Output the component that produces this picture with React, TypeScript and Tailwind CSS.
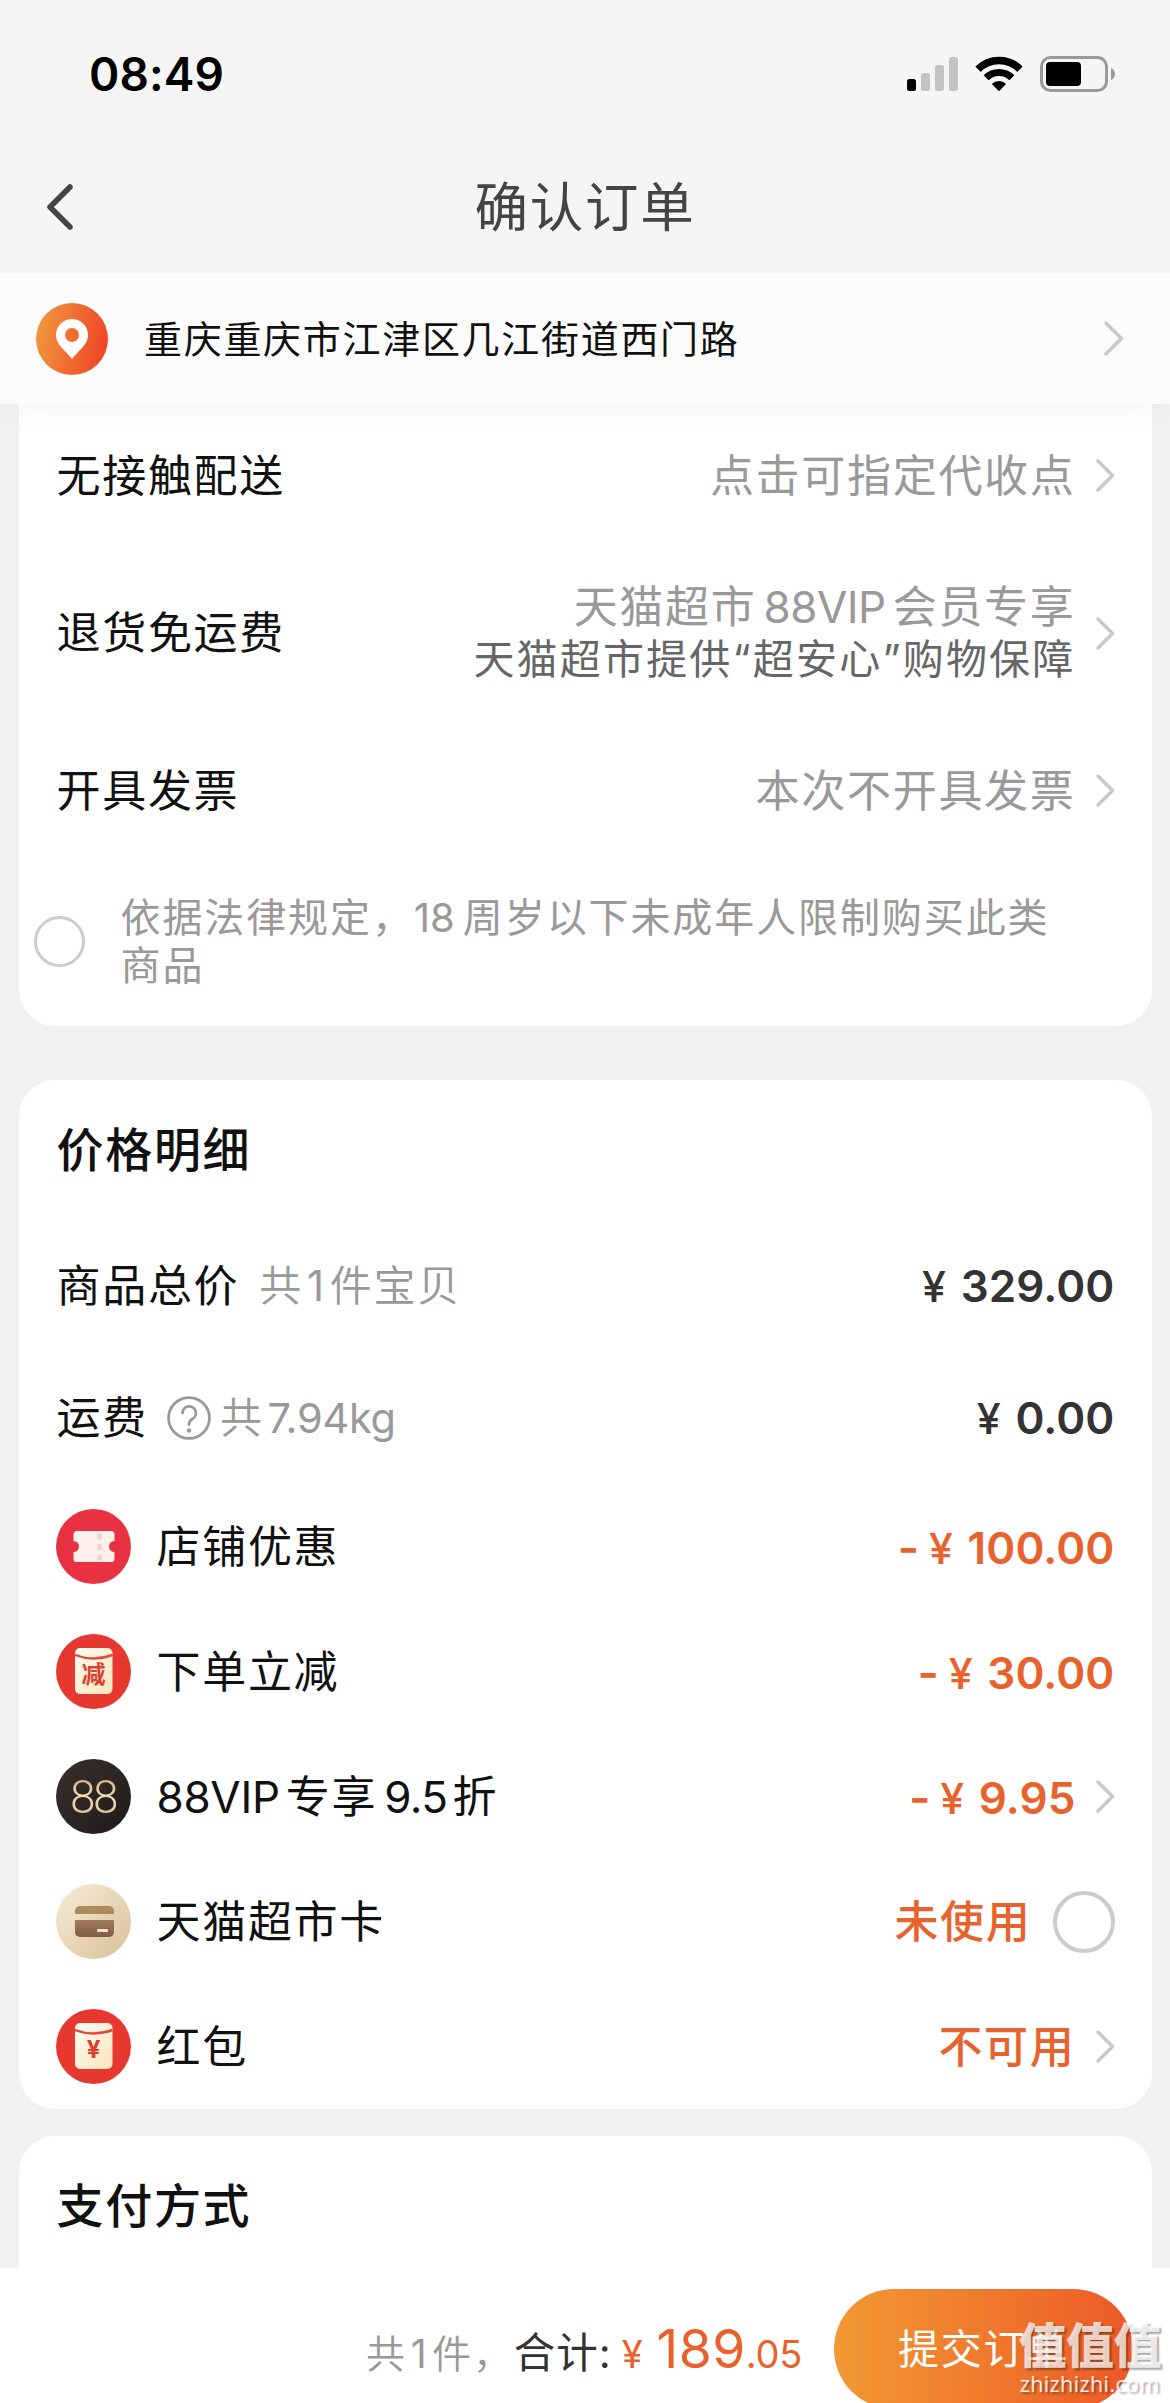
import React from 'react'

const Chevron = ({ className = 'w-[19px] h-[33px]' }: { className?: string }) => (
  <svg viewBox="0 0 19 33" fill="none" className={className}>
    <path
      d="M2 2 L16.5 16.5 L2 31"
      stroke="#c8c8c8"
      strokeWidth="3.4"
      strokeLinecap="round"
      strokeLinejoin="round"
    />
  </svg>
)

const StatusBar = () => (
  <div className="flex items-center justify-between h-[148px] pl-[89px] pr-[54px]">
    <span className="text-[46px] leading-none font-semibold text-black tracking-[0.1px]">08:49</span>
    <div className="flex items-center">
      <svg width="51" height="36" viewBox="0 0 51 36">
        <rect x="0" y="23" width="9" height="12" rx="2.5" fill="#000" />
        <rect x="14" y="17" width="9" height="18" rx="2.5" fill="#c3c3c3" />
        <rect x="28" y="9" width="9" height="26" rx="2.5" fill="#c3c3c3" />
        <rect x="42" y="1" width="9" height="34" rx="2.5" fill="#c3c3c3" />
      </svg>
      <svg width="48" height="40" viewBox="0 0 50 42" className="ml-[17px]" fill="none">
        <path d="M3 16 A31 31 0 0 1 47 16" stroke="#000" strokeWidth="8" />
        <path d="M11.5 25 A19 19 0 0 1 38.5 25" stroke="#000" strokeWidth="7.4" />
        <path d="M17.5 31.5 A10.5 10.5 0 0 1 32.5 31.5 L25 39 Z" fill="#000" />
      </svg>
      <svg width="76" height="36" viewBox="0 0 76 36" className="ml-[17px]">
        <rect x="1.5" y="1.5" width="65" height="33" rx="9" fill="none" stroke="#999" strokeWidth="3" />
        <rect x="6" y="6" width="35" height="24" rx="4" fill="#000" />
        <path d="M71 12 Q75 14 75 18 Q75 22 71 24 Z" fill="#999" />
      </svg>
    </div>
  </div>
)

const CouponIcon = () => (
  <svg width="75" height="75" viewBox="0 0 75 75">
    <circle cx="37.5" cy="37.5" r="37.5" fill="#e83241" />
    <path
      d="M21 22 H55 a3.5 3.5 0 0 1 3.5 3.5 V32 a5.5 5.5 0 0 0 0 11 V49.5 a3.5 3.5 0 0 1 -3.5 3.5 H21 a3.5 3.5 0 0 1 -3.5 -3.5 V43 a5.5 5.5 0 0 0 0 -11 V25.5 a3.5 3.5 0 0 1 3.5 -3.5 Z"
      fill="#fdf0ed"
    />
    <path d="M43.5 24.5 V52" stroke="#f2d3cd" strokeWidth="4.5" strokeDasharray="6 4.5" />
  </svg>
)

const EnvelopeIcon = ({ label, size }: { label: string; size: number }) => (
  <svg width="75" height="75" viewBox="0 0 75 75">
    <defs>
      <linearGradient id="envelope" x1="0" y1="0" x2="1" y2="1">
        <stop offset="0" stopColor="#fffaf0" />
        <stop offset="1" stopColor="#fbe5bb" />
      </linearGradient>
    </defs>
    <circle cx="37.5" cy="37.5" r="37.5" fill="#e6382e" />
    <rect x="19" y="14" width="37.5" height="46" rx="5" fill="url(#envelope)" />
    <path d="M19 21 Q37.5 28 56.5 21" fill="none" stroke="#dd4a3c" strokeWidth="2.4" />
    <text
      x="37.5"
      y="49"
      textAnchor="middle"
      fontSize={size}
      fontWeight="700"
      letterSpacing="0"
      fill="#d9402f"
    >
      {label}
    </text>
  </svg>
)

const VipIcon = () => (
  <div className="flex items-center justify-center size-[75px] rounded-full bg-linear-to-br from-[#3a302d] to-[#1f1b1b]">
    <span className="pt-px text-[46px] leading-none tracking-[-2.6px] text-transparent bg-clip-text bg-linear-to-b from-[#c99f72] via-[#f3dcb8] to-[#d9b58c] font-['Roboto',sans-serif] font-light">
      88
    </span>
  </div>
)

const CardIcon = () => (
  <svg width="75" height="75" viewBox="0 0 75 75">
    <defs>
      <linearGradient id="cardBg" x1="0" y1="0" x2="1" y2="1">
        <stop offset="0" stopColor="#f7ecd6" />
        <stop offset="1" stopColor="#d9c09a" />
      </linearGradient>
      <linearGradient id="cardBody" x1="0" y1="0" x2="0" y2="1">
        <stop offset="0" stopColor="#a37a5c" />
        <stop offset="1" stopColor="#805c45" />
      </linearGradient>
    </defs>
    <circle cx="37.5" cy="37.5" r="37.5" fill="url(#cardBg)" />
    <path d="M19 30 V27 a5 5 0 0 1 5 -5 H53 a5 5 0 0 1 5 5 V30 Z" fill="#ab8a62" />
    <path d="M19 36 H58 V48 a5 5 0 0 1 -5 5 H24 a5 5 0 0 1 -5 -5 Z" fill="url(#cardBody)" />
    <rect x="41" y="45" width="11" height="3" rx="1" fill="#f3e2c6" />
  </svg>
)

const Amount = ({ children, minus }: { children: React.ReactNode; minus?: boolean }) => (
  <span className="flex items-baseline font-semibold leading-none">
    {minus && <span className="mr-[8px] text-[46px]">-</span>}
    <span className="mr-[13px] text-[43px] font-medium">¥</span>
    <span className="text-[44px] tracking-[0.1px]">{children}</span>
  </span>
)

const Radio = ({ className }: { className: string }) => (
  <span className={`block shrink-0 rounded-full border-[#ccc] ${className}`} />
)

const discounts = [
  {
    icon: <CouponIcon />,
    label: '店铺优惠',
    value: <Amount minus>100.00</Amount>,
  },
  {
    icon: <EnvelopeIcon label="减" size={24} />,
    label: '下单立减',
    value: <Amount minus>30.00</Amount>,
  },
  {
    icon: <VipIcon />,
    label: (
      <>
        <span className="mr-[6px] tracking-[-0.3px]">88VIP</span>专享
        <span className="ml-[7px] mr-[5px] tracking-[-0.5px]">9.5</span>折
      </>
    ),
    value: <Amount minus>9.95</Amount>,
    tail: <Chevron className="w-[19px] h-[33px] ml-[20px]" />,
  },
  {
    icon: <CardIcon />,
    label: '天猫超市卡',
    value: <span className="font-medium">未使用</span>,
    tail: <Radio className="size-[62px] ml-[21px] border-4" />,
  },
  {
    icon: <EnvelopeIcon label="¥" size={24} />,
    label: '红包',
    value: <span className="font-medium">不可用</span>,
    tail: <Chevron className="w-[19px] h-[33px] ml-[20px]" />,
  },
]

export default function App() {
  return (
    <div className="relative flex flex-col w-[1170px] h-[2403px] overflow-hidden bg-[#f1f1f1] text-[#111] text-[44px] leading-none tracking-[1.7px] whitespace-nowrap font-['Inter','Noto_Sans_CJK_SC',sans-serif]">
      <header className="h-[273px] shrink-0 bg-[#f5f5f5]">
        <StatusBar />
        <div className="grid grid-cols-3 items-center h-[118px]">
          <svg width="28" height="48" viewBox="0 0 28 48" fill="none" className="ml-[46px]">
            <path
              d="M24 4 L4 24 L24 44"
              stroke="#444"
              strokeWidth="5.5"
              strokeLinecap="round"
              strokeLinejoin="round"
            />
          </svg>
          <h1 className="pt-px text-center text-[53.5px] tracking-[1.7px] text-[#444]">确认订单</h1>
        </div>
      </header>

      <div className="relative z-10 flex items-center h-[131px] shrink-0 pl-9 pr-[46px] bg-[#fbfbfb] shadow-[0_14px_28px_-10px_rgba(0,0,0,0.05)]">
        <svg width="72" height="72" viewBox="0 0 72 72">
          <defs>
            <linearGradient id="pin" x1="0" y1="0" x2="1" y2="0.2">
              <stop offset="0" stopColor="#f19d3f" />
              <stop offset="1" stopColor="#ef4a27" />
            </linearGradient>
          </defs>
          <circle cx="36" cy="36" r="36" fill="url(#pin)" />
          <path
            fillRule="evenodd"
            d="M36 16 C27 16 20 23 20 32 C20 42 29 47 36 56 C43 47 52 42 52 32 C52 23 45 16 36 16 Z M36 25 a7 7 0 1 1 0 14 a7 7 0 1 1 0 -14 Z"
            fill="#fff"
          />
        </svg>
        <span className="flex-1 ml-9 pt-px text-[38px]">重庆重庆市江津区几江街道西门路</span>
        <Chevron className="w-[20px] h-[37px]" />
      </div>

      <section className="h-[622px] shrink-0 mx-[18.5px] pl-[38px] pr-[37px] rounded-b-[36px] bg-white">
        <div className="flex items-center justify-between h-[143px]">
          <span>无接触配送</span>
          <div className="flex items-center gap-[20px] text-[#999]">
            点击可指定代收点
            <Chevron />
          </div>
        </div>
        <div className="flex items-center justify-between h-[172px]">
          <span>退货免运费</span>
          <div className="flex items-center gap-[20px]">
            <div className="text-right">
              <p className="leading-[51px] text-[#999]">
                天猫超市<span className="mx-[7px] tracking-[-0.5px]">88VIP</span>会员专享
              </p>
              <p className="text-[41px] leading-[52px] tracking-[2.2px] text-[#666]">
                天猫超市提供“超安心”购物保障
              </p>
            </div>
            <Chevron />
          </div>
        </div>
        <div className="flex items-center justify-between h-[143px]">
          <span>开具发票</span>
          <div className="flex items-center gap-[20px] text-[#999]">
            本次不开具发票
            <Chevron />
          </div>
        </div>
        <div className="flex items-center h-[158px] -ml-[23px]">
          <Radio className="size-[51px] border-3" />
          <p className="ml-[36px] pt-px text-[40px] leading-[48px] tracking-[1.9px] text-[#999]">
            依据法律规定，<span className="mr-[8px] tracking-normal">18</span>周岁以下未成年人限制购买此类
            <br />
            商品
          </p>
        </div>
      </section>

      <section className="h-[1029px] shrink-0 mt-[54px] mx-[18.5px] pl-[38px] pr-[37px] rounded-[36px] bg-white">
        <h2 className="flex items-center h-[139px] text-[47px] font-medium">价格明细</h2>
        <div className="flex items-center h-[133px]">
          <span>商品总价</span>
          <span className="ml-[20px] text-[42px] font-[350] text-[#999]">
            共<span className="ml-[4px] mr-[4px] font-normal">1</span>件宝贝
          </span>
          <div className="ml-auto text-[#333]">
            <Amount>329.00</Amount>
          </div>
        </div>
        <div className="flex items-center h-[132px]">
          <span>运费</span>
          <svg width="44" height="44" viewBox="0 0 44 44" fill="none" className="ml-[19px]">
            <circle cx="22" cy="22" r="20.4" stroke="#999" strokeWidth="2.8" />
            <path
              d="M15.5 17 a6.7 6.7 0 1 1 9.8 6 C22.8 24.4 22 25.5 22 28.5"
              stroke="#999"
              strokeWidth="2.8"
              strokeLinecap="round"
            />
            <circle cx="22" cy="34.5" r="2.2" fill="#999" />
          </svg>
          <span className="ml-[9px] text-[42px] font-[350] text-[#999]">
            共<span className="ml-[4px] text-[41.5px] tracking-[-0.3px] font-normal">7.94kg</span>
          </span>
          <div className="ml-auto text-[#333]">
            <Amount>0.00</Amount>
          </div>
        </div>
        {discounts.map((row, i) => (
          <div key={i} className="flex items-center h-[125px] -ml-px">
            {row.icon}
            <span className="ml-[26px]">{row.label}</span>
            <div className="flex items-center ml-auto text-[#e8622d]">
              {row.value}
              {row.tail}
            </div>
          </div>
        ))}
      </section>

      <section className="h-[132px] shrink-0 mt-[27px] mx-[18.5px] pl-[38px] rounded-t-[36px] bg-white">
        <h2 className="flex items-center h-[139px] text-[47px] font-medium">支付方式</h2>
      </section>

      <footer className="flex h-[135px] shrink-0 pt-[21px] pr-[37px] overflow-hidden bg-white">
        <div className="flex items-baseline ml-auto h-[120px] leading-[119px]">
          <span className="text-[39px] font-[350] text-[#999]">
            共<span className="mx-[4px] font-normal">1</span>件，
          </span>
          <span className="text-[41.5px] tracking-[1px] text-[#333]">合计:</span>
          <span className="ml-[10px] text-[38px] tracking-normal text-[#e8622d]">¥</span>
          <span className="ml-[14px] text-[53.5px] tracking-[0.4px] text-[#e8622d]">189</span>
          <span className="text-[38px] tracking-[-0.3px] text-[#e8622d]">.05</span>
        </div>
        <button className="w-[299px] h-[120px] ml-[32px] rounded-full bg-linear-to-r from-[#f19833] to-[#ec5826] text-white text-[41px] tracking-[1.7px]">
          提交订单
        </button>
      </footer>

      <div className="absolute right-[9px] bottom-[6px] z-20 flex flex-col items-center text-white/75 [text-shadow:2px_2px_2px_rgba(0,0,0,0.35)]">
        <span className="text-[48px] leading-[50px] tracking-[-0.5px] font-black">值值值</span>
        <span className="text-[21.5px] leading-[26px] tracking-[0.4px] font-medium text-white/90 font-['Open_Sans',sans-serif]">
          zhizhizhi.com
        </span>
      </div>
    </div>
  )
}
